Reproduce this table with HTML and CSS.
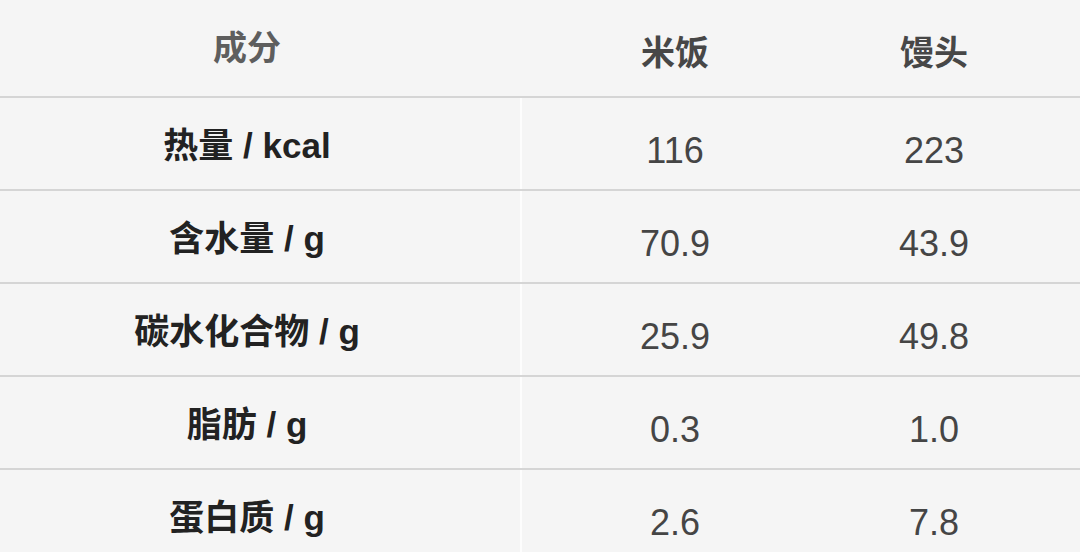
FILE: index.html
```html
<!DOCTYPE html>
<html lang="zh-CN">
<head>
<meta charset="utf-8">
<title>米饭与馒头营养成分</title>
<link rel="stylesheet" href="styles.css">
</head>
<body>
<div class="table">
  <div class="row head">
    <div class="cell label-head">成分</div>
    <div class="cell food">米饭</div>
    <div class="cell food">馒头</div>
  </div>
  <div class="row">
    <div class="cell label">热量 / kcal</div>
    <div class="cell num">116</div>
    <div class="cell num">223</div>
  </div>
  <div class="row">
    <div class="cell label">含水量 / g</div>
    <div class="cell num">70.9</div>
    <div class="cell num">43.9</div>
  </div>
  <div class="row">
    <div class="cell label">碳水化合物 / g</div>
    <div class="cell num">25.9</div>
    <div class="cell num">49.8</div>
  </div>
  <div class="row">
    <div class="cell label">脂肪 / g</div>
    <div class="cell num">0.3</div>
    <div class="cell num">1.0</div>
  </div>
  <div class="row">
    <div class="cell label">蛋白质 / g</div>
    <div class="cell num">2.6</div>
    <div class="cell num">7.8</div>
  </div>
</div>
</body>
</html>
```
FILE: styles.css
```css
html, body {
  margin: 0;
  padding: 0;
  background: #f5f5f5;
  overflow: hidden;
  height: 552px;
}
.table {
  width: 1080px;
  font-family: "Liberation Sans", "Noto Sans CJK SC", sans-serif;
}
.row {
  display: grid;
  grid-template-columns: 522px 306px 212px;
  height: 91px;
  border-bottom: 2px solid #d5d5d5;
}
.row.head {
  height: 96px;
}
.cell {
  display: flex;
  align-items: center;
  justify-content: center;
  box-sizing: border-box;
  white-space: nowrap;
}
.label, .label-head {
  padding-right: 26px;
  border-right: 2px solid #fdfdfd;
}
.label-head {
  border-right-color: transparent;
  padding-bottom: 6px;
  font-size: 34px;
  font-weight: 700;
  color: #5e5e5e;
}
.food {
  padding-top: 4px;
  font-size: 34px;
  font-weight: 700;
  color: #474747;
}
.label {
  padding-bottom: 2px;
  font-size: 35px;
  font-weight: 700;
  color: #222222;
}
.num {
  padding-top: 14px;
  font-size: 36px;
  font-weight: 400;
  color: #454545;
}
```
